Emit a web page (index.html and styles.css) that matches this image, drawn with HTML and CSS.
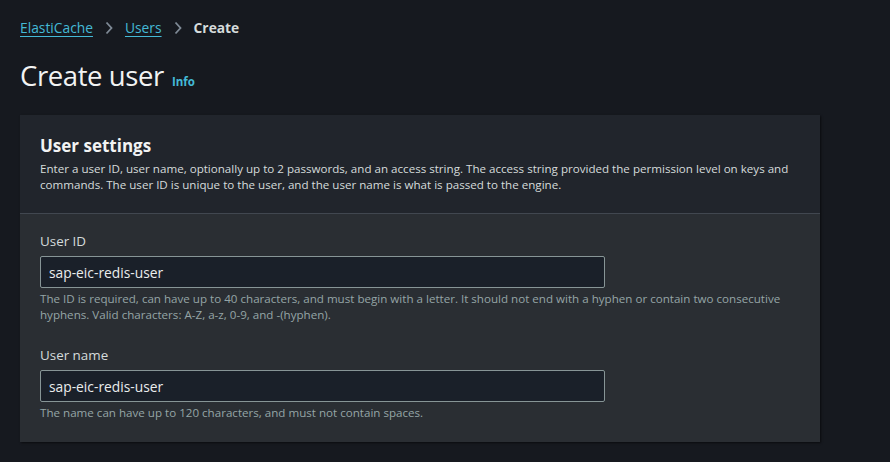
FILE: index.html
```html
<!DOCTYPE html>
<html lang="en">
<head>
<meta charset="utf-8">
<title>Create user</title>
<link rel="stylesheet" href="styles.css">
</head>
<body>
<div class="page">
  <nav class="breadcrumbs">
    <a class="crumb-link" href="#">ElastiCache</a>
    <svg class="chev" width="8" height="14" viewBox="0 0 8 14"><path d="M1.5 1.5 L6.5 7 L1.5 12.5" fill="none" stroke="#7f8a96" stroke-width="1.8"/></svg>
    <a class="crumb-link" href="#">Users</a>
    <svg class="chev" width="8" height="14" viewBox="0 0 8 14"><path d="M1.5 1.5 L6.5 7 L1.5 12.5" fill="none" stroke="#7f8a96" stroke-width="1.8"/></svg>
    <span class="crumb-current">Create</span>
  </nav>

  <div class="title-row">
    <h1 class="title">Create user</h1>
    <a class="info" href="#">Info</a>
  </div>

  <section class="card">
    <header class="card-header">
      <h2 class="card-title">User settings</h2>
      <p class="card-desc">Enter a user ID, user name, optionally up to 2 passwords, and an access string. The access string provided the permission level on keys and commands. The user ID is unique to the user, and the user name is what is passed to the engine.</p>
    </header>
    <div class="card-body">
      <div class="field">
        <label class="label">User ID</label>
        <div class="input">sap-eic-redis-user</div>
        <p class="help">The ID is required, can have up to 40 characters, and must begin with a letter. It should not end with a hyphen or contain two consecutive hyphens. Valid characters: A-Z, a-z, 0-9, and -(hyphen).</p>
      </div>
      <div class="field">
        <label class="label">User name</label>
        <div class="input">sap-eic-redis-user</div>
        <p class="help">The name can have up to 120 characters, and must not contain spaces.</p>
      </div>
    </div>
  </section>
</div>
</body>
</html>
```
FILE: styles.css
```css
html, body {
  margin: 0;
  padding: 0;
  background: #16191f;
  height: 100%;
  overflow: hidden;
}
body {
  font-family: "Open Sans", "Noto Sans", sans-serif;
  color: #d5dbdb;
}
.page {
  padding: 18px 20px 0 20px;
}
.breadcrumbs {
  display: flex;
  align-items: center;
  height: 20px;
  font-size: 13.8px;
  line-height: 20px;
}
.crumb-link {
  color: #44b9d6;
  text-decoration: underline;
  text-underline-offset: 3px;
  text-decoration-thickness: 1px;
}
.chev {
  margin: 0 12px;
  display: block;
}
.crumb-current {
  font-weight: 700;
  color: #d5dbdb;
}
.title-row {
  display: flex;
  align-items: baseline;
  margin-top: 20px;
}
.title {
  margin: 0;
  font-size: 27.5px;
  line-height: 36px;
  font-weight: 400;
  color: #f2f3f3;
  letter-spacing: -0.4px;
}
.info {
  margin-left: 8px;
  font-size: 11.5px;
  font-weight: 700;
  color: #44b9d6;
  text-decoration: none;
}
.card {
  margin-top: 21px;
  width: 800px;
  background: #2a2e33;
  box-shadow: 1px 1px 2px rgba(0, 0, 0, 0.55);
}
.card-header {
  background: #21252c;
  padding: 20px 20px 20px 20px;
  border-bottom: 1px solid #414750;
}
.card-title {
  margin: 0;
  font-size: 17px;
  line-height: 22px;
  font-weight: 700;
  color: #f2f3f3;
}
.card-desc {
  margin: 4px 0 0 0;
  font-size: 11.6px;
  line-height: 16px;
  color: #d5dbdb;
}
.card-body {
  padding: 17px 20px 21px 20px;
  display: flex;
  flex-direction: column;
  gap: 22px;
}
.field {
  display: flex;
  flex-direction: column;
}
.label {
  font-size: 13.4px;
  line-height: 20px;
  color: #d5dbdb;
}
.input {
  margin-top: 5px;
  box-sizing: border-box;
  width: 565px;
  height: 32px;
  border: 1px solid #879596;
  border-radius: 2px;
  background: #1a2029;
  padding: 0 8px;
  display: flex;
  align-items: center;
  font-size: 13.8px;
  color: #eaeded;
}
.help {
  margin: 3px 0 0 0;
  font-size: 11.6px;
  line-height: 16px;
  color: #95a5a6;
}
```
